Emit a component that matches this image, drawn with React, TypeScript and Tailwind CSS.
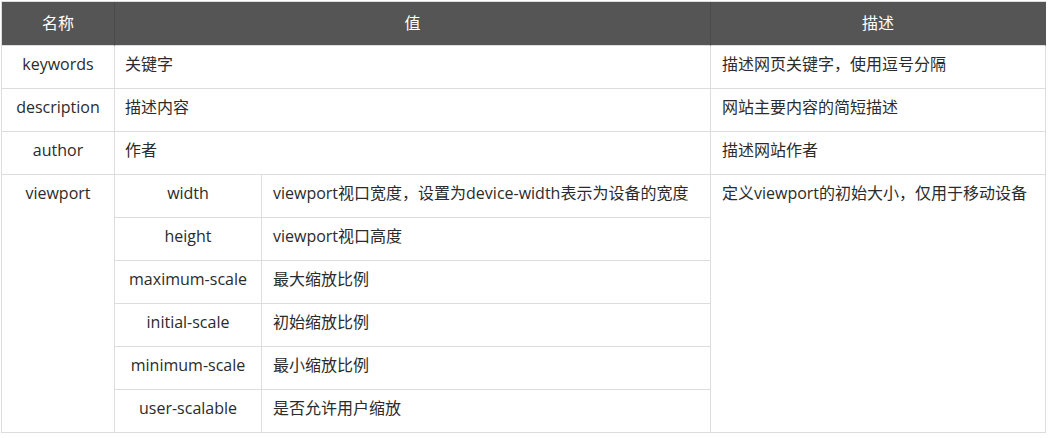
import React from 'react';

const simpleRows = [
  { name: 'keywords', value: '关键字', desc: '描述网页关键字，使用逗号分隔' },
  { name: 'description', value: '描述内容', desc: '网站主要内容的简短描述' },
  { name: 'author', value: '作者', desc: '描述网站作者' },
];

const viewportRows = [
  { key: 'width', value: 'viewport视口宽度，设置为device-width表示为设备的宽度' },
  { key: 'height', value: 'viewport视口高度' },
  { key: 'maximum-scale', value: '最大缩放比例' },
  { key: 'initial-scale', value: '初始缩放比例' },
  { key: 'minimum-scale', value: '最小缩放比例' },
  { key: 'user-scalable', value: '是否允许用户缩放' },
];

const cell = 'border-r border-b border-[#ddd] h-[43px] leading-[37px] whitespace-nowrap overflow-hidden';

const App = () => {
  return (
    <div className="w-[1049px] h-[438px] bg-white pl-px pt-px">
      <div
        className="w-[1045px] border-l border-t border-[#ddd] text-[16px] text-[#2b2b2b] grid grid-cols-[113px_147px_449px_335px]"
        style={{ fontFamily: '"Open Sans", "Noto Sans CJK SC", sans-serif' }}
      >
        {/* header */}
        <div className="h-[44px] leading-[42px] bg-[#555] text-white text-center border-r border-b border-r-[#4a4a4a] border-b-[#ddd]">名称</div>
        <div className="col-span-2 h-[44px] leading-[42px] bg-[#555] text-white text-center border-r border-b border-r-[#4a4a4a] border-b-[#ddd]">值</div>
        <div className="h-[44px] leading-[42px] bg-[#555] text-white text-center border-r border-b border-r-[#555] border-b-[#ddd]">描述</div>

        {/* simple rows */}
        {simpleRows.map((r) => (
          <React.Fragment key={r.name}>
            <div className={`${cell} text-center`}>{r.name}</div>
            <div className={`${cell} col-span-2 pl-[10px]`}>{r.value}</div>
            <div className={`${cell} pl-[11px]`}>{r.desc}</div>
          </React.Fragment>
        ))}

        {/* viewport */}
        <div className="row-span-6 border-r border-b border-[#ddd] leading-[37px] text-center">viewport</div>
        {viewportRows.map((r, i) => (
          <React.Fragment key={r.key}>
            <div className={`${cell} text-center`}>{r.key}</div>
            <div className={`${cell} pl-[11px]`}>{r.value}</div>
            {i === 0 && (
              <div className="row-span-6 border-r border-b border-[#ddd] leading-[37px] pl-[11px] whitespace-nowrap">
                定义viewport的初始大小，仅用于移动设备
              </div>
            )}
          </React.Fragment>
        ))}
      </div>
    </div>
  );
};

export default App;
